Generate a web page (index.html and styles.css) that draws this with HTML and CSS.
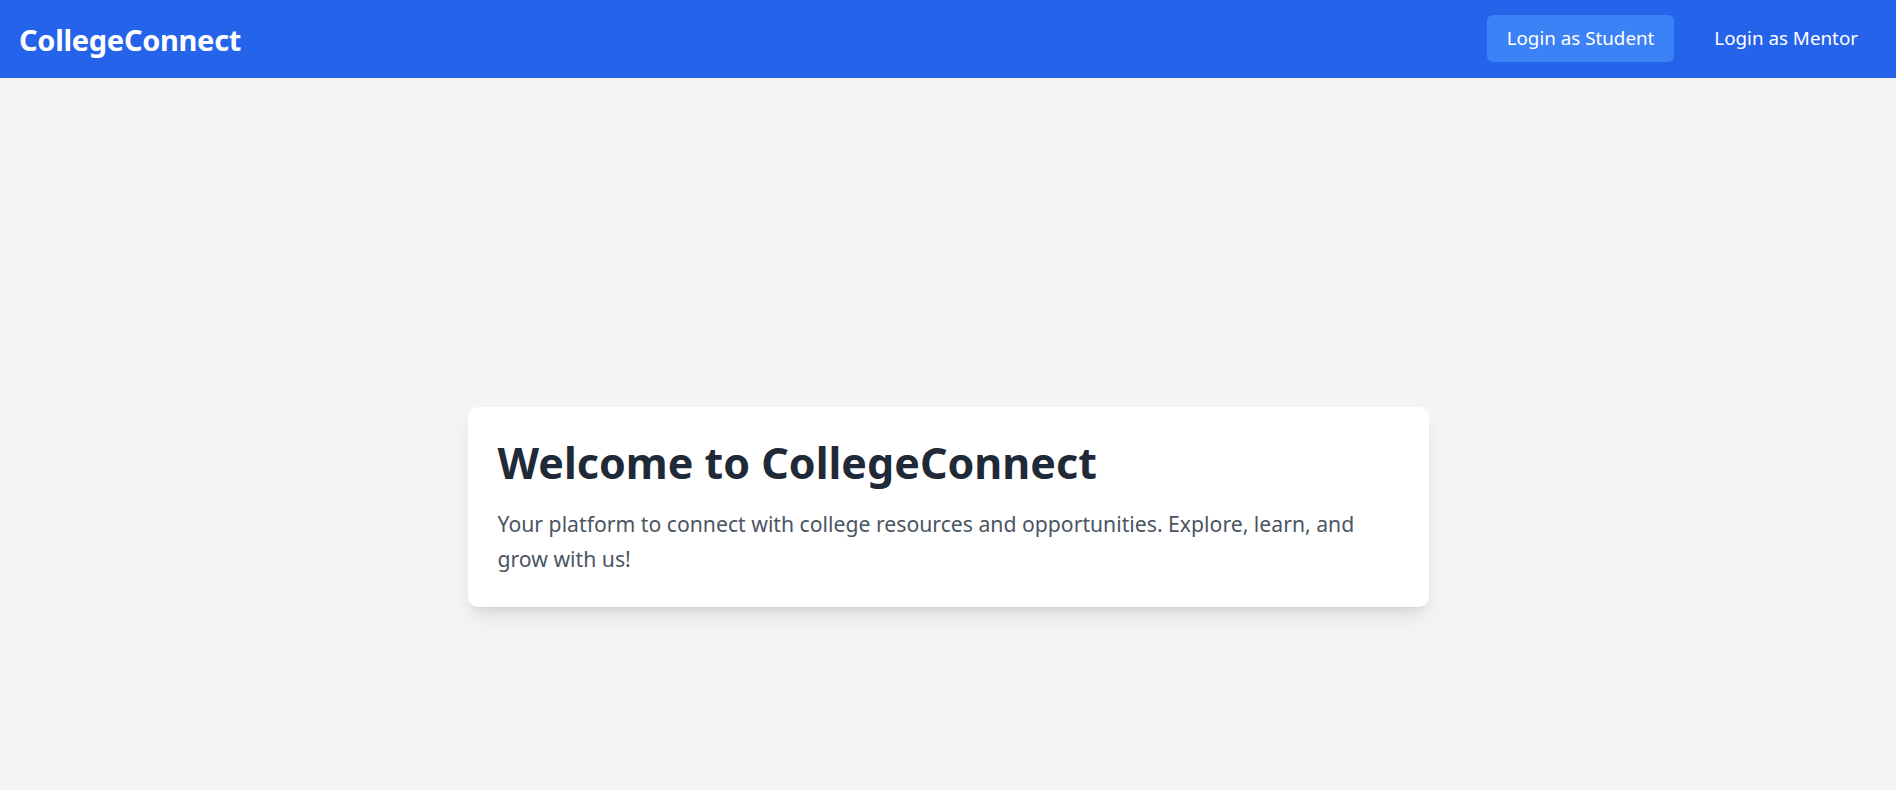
FILE: index.html
```html
<!DOCTYPE html>
<html lang="en">
<head>
<meta charset="utf-8">
<title>CollegeConnect</title>
<link rel="stylesheet" href="styles.css">
</head>
<body>
<header class="navbar">
  <div class="brand">CollegeConnect</div>
  <nav class="nav-links">
    <a class="nav-btn active" href="#">Login as Student</a>
    <a class="nav-btn" href="#">Login as Mentor</a>
  </nav>
</header>
<main class="main">
  <section class="card">
    <h1 class="card-title">Welcome to CollegeConnect</h1>
    <p class="card-text">Your platform to connect with college resources and opportunities. Explore, learn, and grow with us!</p>
  </section>
</main>
</body>
</html>
```

FILE: styles.css
```css
html, body {
  margin: 0;
  padding: 0;
}
body {
  background: #f3f4f6;
  font-family: "Noto Sans", "Open Sans", sans-serif;
  overflow: hidden;
  height: 790px;
}
.navbar {
  height: 78px;
  box-sizing: border-box;
  background: #2563eb;
  display: flex;
  align-items: center;
  justify-content: space-between;
  padding: 0 18px 0 19px;
}
.brand {
  color: #ffffff;
  font-weight: 700;
  font-size: 29px;
  letter-spacing: -0.3px;
}
.nav-links {
  display: flex;
  gap: 20px;
  align-items: center;
}
.nav-btn {
  display: block;
  color: #ffffff;
  text-decoration: none;
  font-size: 18.8px;
  height: 47px;
  line-height: 47px;
  padding: 0 20px;
  border-radius: 6px;
  margin-top: -2px;
}
.nav-btn.active {
  background: #3b82f6;
}
.main {
  display: flex;
  justify-content: center;
  padding-top: 329px;
}
.card {
  width: 961px;
  height: 200px;
  box-sizing: border-box;
  background: #ffffff;
  border-radius: 10px;
  box-shadow: 0 12px 18px -4px rgba(0,0,0,0.1), 0 5px 7px -5px rgba(0,0,0,0.1);
  padding: 28px 28px 0 30px;
}
.card-title {
  margin: 0;
  color: #1f2937;
  font-size: 43px;
  font-weight: 700;
  line-height: 56px;
}
.card-text {
  margin: 15px 0 0;
  max-width: 875px;
  color: #4b5563;
  font-size: 21.2px;
  line-height: 35px;
}
```
